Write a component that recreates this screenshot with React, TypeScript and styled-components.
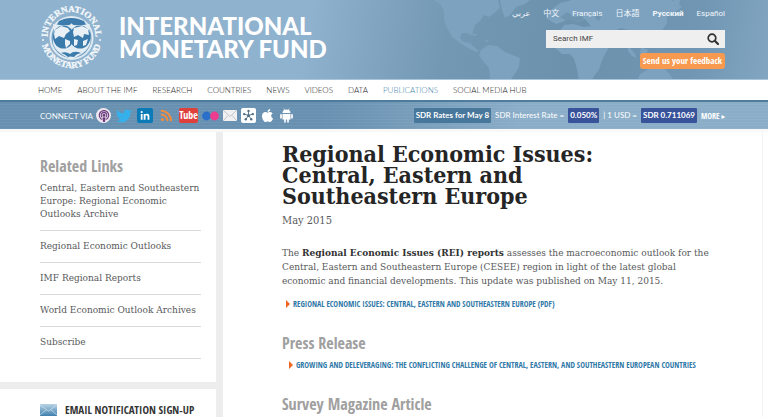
import React from "react";
import styled, { createGlobalStyle } from "styled-components";
import { FaTwitter, FaLinkedinIn, FaRss, FaPodcast, FaApple } from "react-icons/fa";

const slab = `"DejaVu Serif Condensed", "DejaVu Serif", serif`;
const slabWide = `"DejaVu Serif", serif`;
const narrow = `"Open Sans Condensed", "DejaVu Sans Condensed", sans-serif`;
const lato = `Lato, "Liberation Sans", sans-serif`;

const GlobalStyle = createGlobalStyle`
  *, *::before, *::after { box-sizing: border-box; }
  body { margin: 0; background: #fff; overflow: hidden; font-family: ${slab}; color: #58595b; }
  a { color: inherit; text-decoration: none; }
  ul { list-style: none; margin: 0; padding: 0; }
  h1, h2, h3, p { margin: 0; }
  svg { display: block; }
`;

const Header = styled.header`
  position: relative;
  display: flex;
  justify-content: space-between;
  height: 80px;
  padding: 0 43px 0 40px;
  background: linear-gradient(100deg, #8fb2ce 0%, #8fb2ce 40%, #7398b4 58%, #6c91ad 75%, #7096b3 90%, #82a6c2 100%);
  border-bottom: 1px solid #a9c5da;
`;

const MapArt = styled.svg`
  position: absolute;
  right: 0;
  top: 0;
  width: 358px;
  height: 79px;
`;

const Brand = styled.a`
  position: relative;
  display: flex;
  align-items: center;
  gap: 16px;
  height: 74px;
  color: #fff;
  font: 900 24px/23px ${lato};
`;

const Tools = styled.div`
  position: relative;
  display: flex;
  flex-direction: column;
  align-items: flex-end;
  padding-top: 8px;
`;

const Languages = styled.ul`
  display: flex;
  gap: 13px;
  height: 22px;
  font: 8px/12px Roboto, "Noto Sans CJK SC", "DejaVu Sans", sans-serif;
  color: #f2f7fb;
`;

const LanguageLink = styled.a<{ $bold?: boolean }>`
  font-weight: ${(p) => (p.$bold ? 700 : 400)};
`;

const SearchForm = styled.form`
  display: flex;
  align-items: center;
  width: 179px;
  height: 18px;
  background: #efefef;
`;

const SearchInput = styled.input`
  flex: 1;
  min-width: 0;
  height: 18px;
  padding: 0 0 0 7px;
  border: 0;
  background: transparent;
  font: 8px/18px Roboto, sans-serif;
  color: #444;
  &::placeholder { color: #444; opacity: 1; }
`;

const SearchButton = styled.button`
  padding: 0 6px;
  border: 0;
  background: transparent;
`;

const Feedback = styled.a`
  margin-top: 5px;
  padding: 0 3px;
  border-radius: 3px;
  background: #f79a50;
  color: #fff;
  font: 700 9px/16px ${narrow};
`;

const Nav = styled.nav`
  padding: 0 38px;
  border-bottom: 2px solid #4d7c9d;
`;

const NavList = styled.ul`
  display: flex;
  gap: 15px;
  font: 300 8px/20px ${lato};
`;

const NavLink = styled.a<{ $current?: boolean }>`
  color: ${(p) => (p.$current ? "#3f7fa8" : "#222")};
`;

const Bar = styled.div`
  display: flex;
  align-items: center;
  justify-content: space-between;
  height: 27px;
  padding: 0 43px 0 40px;
  background:
    repeating-linear-gradient(0deg, rgba(255, 255, 255, 0.05) 0 1px, transparent 1px 3px),
    linear-gradient(90deg, #6890b0 0%, #6890b0 42%, #8aadc8 68%, #8aadc8 100%);
`;

const Connect = styled.div`
  display: flex;
  align-items: center;
  font: 8px/16px ${lato};
  color: #f4f8fb;
`;

const SocialList = styled.ul`
  display: flex;
  align-items: center;
  gap: 4px;
  margin-left: 3px;
`;

const SocialLink = styled.a<{ $fg: string; $bg?: string; $round?: boolean; $w?: number }>`
  display: flex;
  align-items: center;
  justify-content: center;
  width: ${(p) => p.$w ?? 15}px;
  height: 15px;
  border-radius: ${(p) => (p.$round ? "50%" : "2px")};
  background: ${(p) => p.$bg ?? "transparent"};
  color: ${(p) => p.$fg};
  font: 700 10px/15px ${narrow};
`;

const Rates = styled.div`
  display: flex;
  align-items: center;
  gap: 4px;
  font: 400 8px/15px ${lato};
  color: #fff;
`;

const RateTag = styled.span<{ $bg: string }>`
  padding: 0 2px;
  border-radius: 1px;
  background: ${(p) => p.$bg};
  font-weight: 700;
`;

const MoreLink = styled.a`
  font: 700 8px/15px ${narrow};
`;

const Columns = styled.div`
  display: flex;
  align-items: stretch;
  border-top: 3px solid #f8f8f9;
`;

const Sidebar = styled.aside`
  flex: 0 0 223px;
  border-right: 7px solid #ededed;
`;

const RelatedPanel = styled.section`
  padding: 24px 15px 23px 40px;
  border-bottom: 7px solid #ededed;
`;

const SectionTitle = styled.h2`
  font: 700 16px/20px ${narrow};
  color: #a0a0a0;
`;

const RelatedItem = styled.li`
  padding: 9px 0;
  border-bottom: 1px solid #d9d9d9;
  font: 9px/13px ${slabWide};
  &:first-child { padding-top: 6px; }
`;

const SignUp = styled.section`
  display: flex;
  align-items: center;
  gap: 8px;
  padding: 12px 0 12px 40px;
`;

const SignUpTitle = styled.h3`
  font: 700 11px/18px ${narrow};
  color: #333;
`;

const Main = styled.main`
  flex: 1;
  padding: 11px 48px 0 59px;
  margin-right: 5px;
  border-right: 1px solid #f3f3f3;
`;

const Title = styled.h1`
  max-width: 340px;
  font: 700 23px/21px ${slab};
  color: #252525;
`;

const DateLine = styled.p`
  margin-top: 7px;
  font: 11px/16px ${slab};
`;

const Intro = styled.p`
  margin: 17px 0 9px;
  font: 10px/14px ${slab};
  strong { color: #333; }
`;

const DocLink = styled.a<{ $indent: number }>`
  display: flex;
  align-items: center;
  gap: 3px;
  padding-left: ${(p) => p.$indent}px;
  font: 700 8px/14px ${narrow};
  color: #2f79a8;
  &::before {
    content: "";
    border-left: 4px solid #f26522;
    border-top: 4px solid transparent;
    border-bottom: 4px solid transparent;
  }
`;

const Block = styled.section`
  margin-top: 22px;
  display: grid;
  gap: 5px;
`;

const WorldMap = () => (
  <MapArt viewBox="410 0 358 79" aria-hidden="true">
    <g fill="#7ca2c0">
      <path d="M418 0h80l2 8-7 6-4 3-5-2-4 6-5 4-2 6-2 5-3-3-6 0-2 5 4 4 6 1 4 4 5 4-3 1-8-4-8-5-8-6-5-9-3-8 0-9-4-7-8-5-10-1-6 3z" />
      <path d="M472 33l6 2-5 1zM485 40l5 1-4 1z" />
      <path d="M481 50l7-5 9 1 8 6 15 6-1 9-5 8-3 4h-21l-1-11-6-7-4-6z" />
      <path d="M500 0h30l-5 4-9 3-6 8-5 3-3-8z" />
      <path d="M546 18l5-8 9-7 12-3h100l10 7-8 6-7 2 0 8-6 9-4 12-3 1-4-9-4-3-5 10-5-5-4-7-11-3-7 3 5 5-4 8-3-2-4 7-4 7-3 7-2 7-5 6-2 5h-13l-2-12-3-10-4-5-8 0-7-6-2-8 7-9 4-6 9-1 11 3 7-1-6-7-9 2-8-2-6 3-6 2z" />
      <path d="M584 65l6-5-1 8-5 6-2-3zM628 46l5 5 4 7-5-2-4-5zM641 47l7 3-3 6-5-2zM652 55l12 3 5 4-9-1zM638 79l2-5 7-4 5-2 7 0 3-2 6 6 5 7z" />
      <path d="M674 0h6l-1 6-7 6-3-2 5-5z" />
    </g>
    <g fill="#6f95b1">
      <path d="M560 17l8-5 5 5 9-1 3 5-8 2-7-4-5 1zM597 12l5 2-3 7-4-3z" />
    </g>
  </MapArt>
);

const Seal = () => (
  <svg width="63" height="66" viewBox="0 0 63 66" aria-hidden="true">
    <defs>
      <path id="sealTop" d="M7.500 33a24 25 0 0 1 48 0" />
      <path id="sealBottom" d="M1.500 34a30 30 0 0 0 60 0" />
    </defs>
    <g fill="#f4f8fb" stroke="#f4f8fb" strokeWidth=".3" fontFamily="Liberation Serif, serif" fontWeight="700" fontSize="9">
      <text textAnchor="middle"><textPath href="#sealTop" startOffset="50%">INTERNATIONAL</textPath></text>
      <text textAnchor="middle"><textPath href="#sealBottom" startOffset="50%">MONETARY FUND</textPath></text>
    </g>
    <circle cx="3" cy="36" r="1" fill="#f1f6fa" />
    <circle cx="60" cy="36" r="1" fill="#f1f6fa" />
    <circle cx="31.500" cy="34" r="22" fill="#dfeaf2" />
    <circle cx="31.500" cy="34" r="20" fill="#6d9dc2" />
    <path d="M19 17q12-6 25 0l2 4H17z" fill="#3d7cad" />
    <path d="M13 20q18 3 18.500-1q.500 4 18.500 1c-3 9 4 17-2 24q-5 7-16.500 11q-12-4-16.500-11c-5-7 1-15-2-24z" fill="#e4edf4" />
    <ellipse cx="23.500" cy="33" rx="10.500" ry="11.500" fill="#3b7bac" />
    <ellipse cx="40" cy="33" rx="10.500" ry="11.500" fill="#3b7bac" />
    <path d="M15 26l6-4 7 2 2 3-4 3-2 4-5-2-4 3-1-5zM25 35l5 2 0 3-4 4-1-4zM34 24l8-2 6 3 1 6-5-1-1 4-5-3-4 2-1-5zM34 35l4 1-1 5-3 1zM43 37l5-2-2 6-3 1z" fill="#e9f1f7" />
    <path d="M21 49q5-2 9 1q4-4 11-1q-5 1-7 4q-4-1-6 0q-3-3-7-4z" fill="#3b7bac" />
  </svg>
);

const SearchIcon = () => (
  <svg width="12" height="12" viewBox="0 0 12 12" fill="none" stroke="#333" aria-hidden="true">
    <circle cx="5" cy="5" r="3.800" strokeWidth="1.700" />
    <path d="M7.800 7.800l3.200 3.200" strokeWidth="2.200" strokeLinecap="round" />
  </svg>
);

const FlickrIcon = () => (
  <svg width="17" height="10" viewBox="0 0 17 10" aria-hidden="true">
    <circle cx="4.500" cy="5" r="4.400" fill="#2a6fc9" />
    <circle cx="12.500" cy="5" r="4.400" fill="#ee3d8f" />
  </svg>
);

const MailIcon = () => (
  <svg width="14" height="11" viewBox="0 0 14 11" aria-hidden="true">
    <rect width="14" height="11" rx="1" fill="#f1f1f1" />
    <path d="M.5.5l6.500 6 6.500-6M.5 10.500l4.500-5M13.500 10.500l-4.500-5" fill="none" stroke="#b5b9bd" strokeWidth=".8" />
  </svg>
);

const HubIcon = () => (
  <svg width="13" height="13" viewBox="0 0 13 13" stroke="#4f6f88" fill="#4f6f88" aria-hidden="true">
    <path d="M6.500 6.500V2M6.500 6.500l4.300-1.400M6.500 6.500l2.700 3.800M6.500 6.500l-2.700 3.800M6.500 6.500L2.200 5.100" strokeWidth=".9" />
    <g stroke="none">
      <circle cx="6.500" cy="2" r="1.200" /><circle cx="10.800" cy="5.100" r="1.200" /><circle cx="9.200" cy="10.300" r="1.200" />
      <circle cx="3.800" cy="10.300" r="1.200" /><circle cx="2.200" cy="5.100" r="1.200" /><circle cx="6.500" cy="6.500" r="1.500" />
    </g>
  </svg>
);

const AndroidIcon = () => (
  <svg width="13" height="15" viewBox="0 0 13 15" fill="#fff" stroke="#fff" strokeLinecap="round" aria-hidden="true">
    <path d="M4 1l1 1.500M9 1L8 2.500" strokeWidth=".7" />
    <path d="M2.500 5a4 3.500 0 0 1 8 0zM2.500 6h8v5.500h-8z" stroke="none" />
    <path d="M1 6.800v3M12 6.800v3M5 11v2.800M8 11v2.800" strokeWidth="1.700" />
  </svg>
);

const EnvelopeIcon = () => (
  <svg width="17" height="12" viewBox="0 0 17 12" aria-hidden="true">
    <defs>
      <linearGradient id="envelope" x1="0" y1="0" x2="0" y2="1">
        <stop offset="0" stopColor="#b9d3e5" />
        <stop offset="1" stopColor="#3f80ad" />
      </linearGradient>
    </defs>
    <rect width="17" height="12" fill="url(#envelope)" />
    <path d="M0 1l8.500 6L17 1M0 11l6-5M17 11l-6-5" fill="none" stroke="#d3e4ef" strokeWidth=".7" />
  </svg>
);

const languages = [
  { label: "عربي", lang: "ar" },
  { label: "中文", lang: "zh" },
  { label: "Français", lang: "fr" },
  { label: "日本語", lang: "ja" },
  { label: "Русский", lang: "ru", bold: true },
  { label: "Español", lang: "es" },
];

const sections = ["Home", "About the IMF", "Research", "Countries", "News", "Videos", "Data", "Publications", "Social Media Hub"];

const related = [
  "Central, Eastern and Southeastern Europe: Regional Economic Outlooks Archive",
  "Regional Economic Outlooks",
  "IMF Regional Reports",
  "World Economic Outlook Archives",
  "Subscribe",
];

const social = [
  { name: "Podcasts", icon: <FaPodcast size={12} />, fg: "#6b3d7c", bg: "#eee6f1", round: true },
  { name: "Twitter", icon: <FaTwitter size={16} />, fg: "#35b0ea", w: 18 },
  { name: "LinkedIn", icon: <FaLinkedinIn size={10} />, fg: "#fff", bg: "#0b7bb8", w: 16 },
  { name: "RSS", icon: <FaRss size={13} />, fg: "#ee8c42", w: 18 },
  { name: "YouTube", icon: "Tube", fg: "#fff", bg: "#e0403c", w: 19 },
  { name: "Flickr", icon: <FlickrIcon />, fg: "#fff", w: 17 },
  { name: "Email", icon: <MailIcon />, fg: "#fff", w: 14 },
  { name: "Hub", icon: <HubIcon />, fg: "#4f6f88", bg: "#fff" },
  { name: "Apple", icon: <FaApple size={15} />, fg: "#fff" },
  { name: "Android", icon: <AndroidIcon />, fg: "#fff" },
];

export default function App() {
  return (
    <>
      <GlobalStyle />
      <Header>
        <WorldMap />
        <Brand href="#">
          <Seal />
          <span>INTERNATIONAL<br />MONETARY FUND</span>
        </Brand>
        <Tools>
          <Languages>
            {languages.map((l) => (
              <li key={l.lang}><LanguageLink href="#" lang={l.lang} $bold={l.bold}>{l.label}</LanguageLink></li>
            ))}
          </Languages>
          <SearchForm role="search">
            <SearchInput type="text" placeholder="Search IMF" aria-label="Search IMF" />
            <SearchButton type="button" aria-label="Search"><SearchIcon /></SearchButton>
          </SearchForm>
          <Feedback href="#">Send us your feedback</Feedback>
        </Tools>
      </Header>
      <Nav>
        <NavList>
          {sections.map((s) => (
            <li key={s}><NavLink href="#" $current={s === "Publications"}>{s.toUpperCase()}</NavLink></li>
          ))}
        </NavList>
      </Nav>
      <Bar>
        <Connect>
          CONNECT VIA
          <SocialList>
            {social.map((s) => (
              <li key={s.name}>
                <SocialLink href="#" aria-label={s.name} $fg={s.fg} $bg={s.bg} $round={s.round} $w={s.w}>{s.icon}</SocialLink>
              </li>
            ))}
          </SocialList>
        </Connect>
        <Rates>
          <RateTag $bg="#47779b">SDR Rates for May 8</RateTag>
          <span>SDR Interest Rate =</span>
          <RateTag $bg="#39539b">0.050%</RateTag>
          <span>| 1 USD =</span>
          <RateTag $bg="#39539b">SDR 0.711069</RateTag>
          <MoreLink href="#">MORE ▸</MoreLink>
        </Rates>
      </Bar>
      <Columns>
        <Sidebar>
          <RelatedPanel>
            <SectionTitle>Related Links</SectionTitle>
            <ul>
              {related.map((r) => (
                <RelatedItem key={r}><a href="#">{r}</a></RelatedItem>
              ))}
            </ul>
          </RelatedPanel>
          <SignUp>
            <EnvelopeIcon />
            <SignUpTitle>EMAIL NOTIFICATION SIGN-UP</SignUpTitle>
          </SignUp>
        </Sidebar>
        <Main>
          <Title>Regional Economic Issues: Central, Eastern and Southeastern Europe</Title>
          <DateLine>May 2015</DateLine>
          <Intro>
            The <strong>Regional Economic Issues (REI) reports</strong> assesses the macroeconomic outlook for the
            Central, Eastern and Southeastern Europe (CESEE) region in light of the latest global
            economic and financial developments. This update was published on May 11, 2015.
          </Intro>
          <DocLink href="#" $indent={4}>REGIONAL ECONOMIC ISSUES: CENTRAL, EASTERN AND SOUTHEASTERN EUROPE (PDF)</DocLink>
          <Block>
            <SectionTitle>Press Release</SectionTitle>
            <DocLink href="#" $indent={7}>GROWING AND DELEVERAGING: THE CONFLICTING CHALLENGE OF CENTRAL, EASTERN, AND SOUTHEASTERN EUROPEAN COUNTRIES</DocLink>
          </Block>
          <Block>
            <SectionTitle>Survey Magazine Article</SectionTitle>
          </Block>
        </Main>
      </Columns>
    </>
  );
}
